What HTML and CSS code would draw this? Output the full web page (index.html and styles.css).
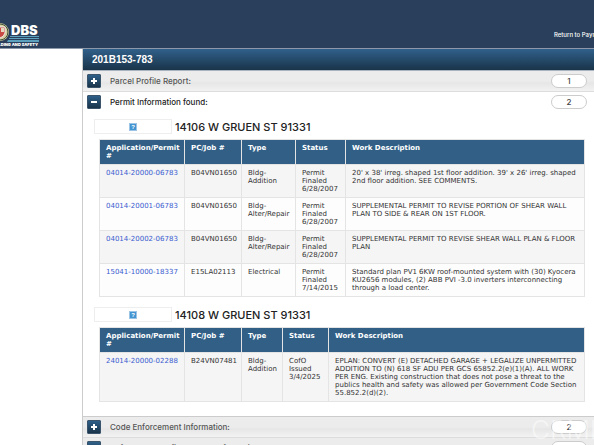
FILE: index.html
```
<!DOCTYPE html>
<html lang="en">
<head>
<meta charset="utf-8">
<title>Parcel Information</title>
<link rel="stylesheet" href="styles.css">
</head>
<body>
<div class="header">
	<svg class="logo" width="39" height="24" viewBox="0 0 39 24">
		<circle cx="0" cy="9" r="9" fill="#d9cfa0"/>
		<circle cx="0" cy="9" r="8" fill="none" stroke="#3d5238" stroke-width="1"/>
		<path d="M-5 4h10v6q-1 4-5 5q-4-1-5-5z" fill="#c94a42" stroke="#eee" stroke-width="1"/>
		<path d="M1 5h3v4h-3z" fill="#e8d8c0"/>
		<path d="M10 13h29v1H10zM9 15h30v1H9zM8 17h31v2H7z" fill="#5ba0bd"/>
		<text x="11" y="12" class="logo-name">DBS</text>
		<text x="38" y="23" text-anchor="end" class="logo-sub">BUILDING AND SAFETY</text>
	</svg>
	<a href="#" class="return">Return to Payment</a>
</div>
<div class="content">
	<h1>201B153-783</h1>
	<div class="bar">
		<button type="button" class="toggle" aria-label="Expand"><svg width="8" height="8"><path d="M4 1v6M1 4h6"/></svg></button>
		<span>Parcel Profile Report:</span>
		<span class="count">1</span>
	</div>
	<div class="bar open">
		<button type="button" class="toggle" aria-label="Collapse"><svg width="8" height="8"><path d="M1 4h6"/></svg></button>
		<span>Permit Information found:</span>
		<span class="count">2</span>
	</div>
	<div class="panel">
		<div class="address">
			<div class="pic"><span>?</span></div>
			<h2>14106 W GRUEN ST 91331</h2>
		</div>
		<table>
			<colgroup><col class="app"><col class="job"><col class="type"><col class="status"><col></colgroup>
			<tr><th>Application/Permit #</th><th>PC/Job #</th><th>Type</th><th>Status</th><th>Work Description</th></tr>
			<tr>
				<td><a href="#">04014-20000-06783</a></td>
				<td>B04VN01650</td>
				<td>Bldg-<br>Addition</td>
				<td>Permit<br>Finaled<br>6/28/2007</td>
				<td>20' x 38' irreg. shaped 1st floor addition. 39' x 26' irreg. shaped<br>2nd floor addition. SEE COMMENTS.</td>
			</tr>
			<tr>
				<td><a href="#">04014-20001-06783</a></td>
				<td>B04VN01650</td>
				<td>Bldg-<br>Alter/Repair</td>
				<td>Permit<br>Finaled<br>6/28/2007</td>
				<td>SUPPLEMENTAL PERMIT TO REVISE PORTION OF SHEAR WALL<br>PLAN TO SIDE &amp; REAR ON 1ST FLOOR.</td>
			</tr>
			<tr>
				<td><a href="#">04014-20002-06783</a></td>
				<td>B04VN01650</td>
				<td>Bldg-<br>Alter/Repair</td>
				<td>Permit<br>Finaled<br>6/28/2007</td>
				<td>SUPPLEMENTAL PERMIT TO REVISE SHEAR WALL PLAN &amp; FLOOR<br>PLAN</td>
			</tr>
			<tr>
				<td><a href="#">15041-10000-18337</a></td>
				<td>E15LA02113</td>
				<td>Electrical</td>
				<td>Permit<br>Finaled<br>7/14/2015</td>
				<td>Standard plan PV1 6KW roof-mounted system with (30) Kyocera<br>KU2656 modules, (2) ABB PVI -3.0 inverters interconnecting<br>through a load center.</td>
			</tr>
		</table>
		<div class="address">
			<div class="pic"><span>?</span></div>
			<h2>14108 W GRUEN ST 91331</h2>
		</div>
		<table>
			<colgroup><col class="app"><col class="job"><col class="type-sm"><col class="status-sm"><col></colgroup>
			<tr><th>Application/Permit #</th><th>PC/Job #</th><th>Type</th><th>Status</th><th>Work Description</th></tr>
			<tr>
				<td><a href="#">24014-20000-02288</a></td>
				<td>B24VN07481</td>
				<td>Bldg-<br>Addition</td>
				<td>CofO<br>Issued<br>3/4/2025</td>
				<td>EPLAN: CONVERT (E) DETACHED GARAGE + LEGALIZE UNPERMITTED<br>ADDITION TO (N) 618 SF ADU PER GCS 65852.2(e)(1)(A). ALL WORK<br>PER ENG. Existing construction that does not pose a threat to the<br>publics health and safety was allowed per Government Code Section<br>55.852.2(d)(2).</td>
			</tr>
		</table>
	</div>
	<div class="bar">
		<button type="button" class="toggle" aria-label="Expand"><svg width="8" height="8"><path d="M4 1v6M1 4h6"/></svg></button>
		<span>Code Enforcement Information:</span>
		<span class="count">2</span>
	</div>
	<div class="bar">
		<button type="button" class="toggle" aria-label="Expand"><svg width="8" height="8"><path d="M4 1v6M1 4h6"/></svg></button>
		<span>Soft-story Retrofit Program Information:</span>
		<span class="count">1</span>
	</div>
</div>
<div class="watermark">CRMLS</div>
</body>
</html>
```
FILE: styles.css
```
*{
	margin:0;
	padding:0;
	box-sizing:border-box;
}
html, body{
	height:100%;
	overflow:hidden;
}
body{
	background:#fff;
	font-family:Inter, "Open Sans", sans-serif;
	font-size:8px;
	color:#333;
}
.header{
	display:flex;
	justify-content:space-between;
	height:49px;
	padding-top:23px;
	background:#2a3f5b;
	border-bottom:1px solid #8d98aa;
}
.logo-name{
	font:900 13px Inter, sans-serif;
	fill:#fff;
}
.logo-sub{
	font:900 4px Inter, sans-serif;
	fill:#fff;
}
.return{
	width:40px;
	padding-top:8px;
	font-size:6px;
	font-weight:500;
	white-space:nowrap;
	color:#fff;
	text-decoration:none;
}
.content{
	margin-left:82px;
	border-left:1px solid #ccc;
}
h1{
	height:22px;
	padding-left:9px;
	font:bold 10px/21px "Liberation Sans", sans-serif;
	color:#fff;
	background:linear-gradient(#30608a, #193449);
	border-bottom:1px solid #aab4be;
}
.bar{
	display:flex;
	align-items:center;
	height:21px;
	padding:0 7px 0 4px;
	font-weight:500;
	color:#555;
	background:linear-gradient(#ececec 50%, #e6e6e6 60%, #f2f2f2);
	border-bottom:1px solid #ddd;
}
.open{
	height:20px;
	color:#222;
	background:#fff;
	border:0;
}
.toggle{
	display:flex;
	align-items:center;
	justify-content:center;
	width:14px;
	height:14px;
	margin-right:9px;
	border:1px solid #3a546c;
	border-radius:1px;
	background:linear-gradient(#2f5f88, #193449);
}
.toggle path{
	stroke:#fff;
	stroke-width:2;
}
.count{
	width:36px;
	height:14px;
	margin-left:auto;
	border:1px solid #ccc;
	border-radius:7px;
	background:#fff;
	color:#444;
	line-height:12px;
	text-align:center;
}
.panel{
	padding:7px 9px 14px 11px;
	border-bottom:1px solid #ccc;
}
.address{
	display:flex;
	align-items:center;
	height:15px;
	margin-bottom:5px;
}
.pic{
	display:flex;
	align-items:center;
	justify-content:center;
	width:78px;
	height:15px;
	margin-right:3px;
	border:1px solid #eee;
}
.pic span{
	width:8px;
	height:8px;
	border:1px solid #9bc4e6;
	background:#4295d1;
	color:#fff;
	font:bold 6px/6px "Liberation Sans", sans-serif;
	text-align:center;
}
h2{
	font-size:11px;
	font-weight:500;
	line-height:14px;
	color:#222;
}
table{
	width:calc(100% - 5px);
	margin:0 0 10px 5px;
	border-collapse:collapse;
	table-layout:fixed;
	font:7px/8px "DejaVu Sans", Verdana, sans-serif;
}
table:last-child{
	margin-bottom:0;
}
.app{
	width:85px;
}
.job{
	width:57px;
}
.type{
	width:54px;
}
.status{
	width:50px;
}
.type-sm{
	width:41px;
}
.status-sm{
	width:46px;
}
th, td{
	padding:4px 0 4px 6px;
	border:1px solid #e4e4e4;
	text-align:left;
	vertical-align:top;
}
th{
	background:#315f86;
	color:#fff;
}
td{
	background:#f5f5f5;
}
tr:nth-child(odd) td{
	background:#fdfdfd;
}
td a{
	color:#3a5cd0;
	text-decoration:none;
}
.watermark{
	position:absolute;
	left:531px;
	bottom:0;
	font-size:26px;
	font-weight:300;
	line-height:30px;
	color:rgba(255,255,255,.5);
}
```
